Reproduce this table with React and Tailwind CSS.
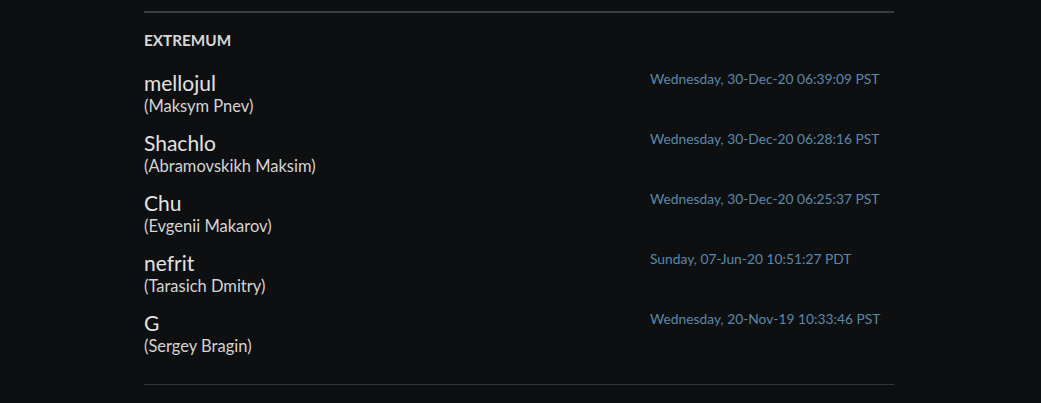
import React from 'react';

const members = [
    { nick: 'mellojul', name: 'Maksym Pnev', date: 'Wednesday, 30-Dec-20 06:39:09 PST' },
    { nick: 'Shachlo', name: 'Abramovskikh Maksim', date: 'Wednesday, 30-Dec-20 06:28:16 PST' },
    { nick: 'Chu', name: 'Evgenii Makarov', date: 'Wednesday, 30-Dec-20 06:25:37 PST' },
    { nick: 'nefrit', name: 'Tarasich Dmitry', date: 'Sunday, 07-Jun-20 10:51:27 PDT' },
    { nick: 'G', name: 'Sergey Bragin', date: 'Wednesday, 20-Nov-19 10:33:46 PST' },
];

export default function App() {
    return (
        <div
            className="w-[1041px] h-[403px] overflow-hidden bg-[#0e0f11] pt-[11px]"
            style={{ fontFamily: 'Lato, "Open Sans", sans-serif' }}
        >
            <div className="ml-[144px] w-[750px]">
                {/* Top rule */}
                <div className="h-[2px] bg-[#3a3b3c]" />

                {/* Team heading */}
                <h2 className="mt-[17px] text-[15.3px] leading-[20px] font-bold text-[#d8d8d8]">
                    EXTREMUM
                </h2>

                {/* Member list */}
                <div className="mt-[20px] flex flex-col gap-[13px]">
                    {members.map((m) => (
                        <div key={m.nick} className="grid grid-cols-[506px_1fr]">
                            <div>
                                <div className="text-[21px] leading-[25px] text-[#e2e2e2]">{m.nick}</div>
                                <div className="text-[16.5px] leading-[22px] text-[#d4d4d4]">({m.name})</div>
                            </div>
                            <div className="pt-[1px] text-[13.8px] leading-[16px] text-[#5b88aa]">{m.date}</div>
                        </div>
                    ))}
                </div>

                {/* Bottom rule */}
                <div className="mt-[27px] h-px bg-[#333436]" />
            </div>
        </div>
    );
}
